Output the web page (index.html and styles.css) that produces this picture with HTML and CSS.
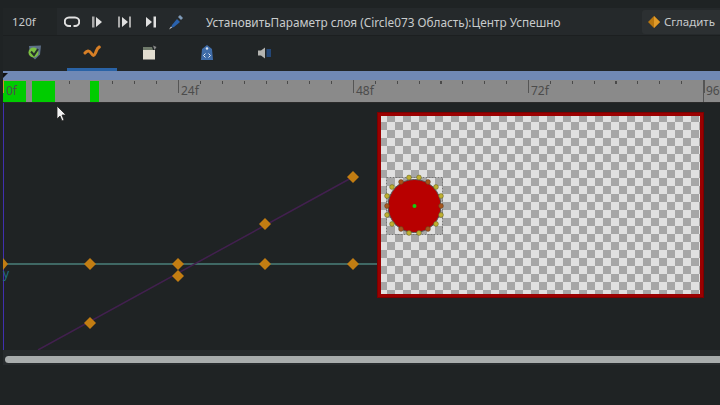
FILE: index.html
```html
<!DOCTYPE html>
<html lang="ru">
<head>
  <meta charset="UTF-8">
  <title>Параметры</title>
  <link rel="stylesheet" href="styles.css">
</head>
<body>
  <div class="app">
    <div class="toolbar">
      <div class="frame-field">120f</div>
      <div class="tools">
        <svg width="16" height="16" viewBox="0 0 16 16"><path d="M5 3.500h6a3.500 3.500 0 0 1 0 8.500H9.500M7 12H5a3.500 3.500 0 0 1 0-8.500" fill="none" stroke="#e0e0e0" stroke-width="2"/></svg>
        <svg width="16" height="16" viewBox="0 0 16 16"><path d="M3 2.500h2.500v11H3z" fill="#a8a8a8"/><path d="M7 3l6 5-6 5z" fill="#e0e0e0"/></svg>
        <svg width="16" height="16" viewBox="0 0 16 16"><path d="M2 2.500h2v11H2zM13 2.500h2v11h-2z" fill="#a8a8a8"/><path d="M6 3l6 5-6 5z" fill="#e0e0e0"/></svg>
        <svg width="16" height="16" viewBox="0 0 16 16"><path d="M3 3l6 5-6 5z" fill="#e0e0e0"/><path d="M10.500 2.500h2.500v11h-2.500z" fill="#e0e0e0"/></svg>
        <svg width="16" height="16" viewBox="0 0 16 16"><path d="M9 5l3 3-6 5-3 1 1-3z" fill="#2a62ad"/><path d="M10 3l2-2 3 3-2 2z" fill="#7f9ab8"/><path d="M1 15.500l2-3 1 1z" fill="#d8d8d8"/></svg>
      </div>
      <div class="status">УстановитьПараметр слоя (Circle073 Область):Центр Успешно</div>
      <button class="smooth-btn">
        <svg width="12" height="12" viewBox="0 0 12 12"><path d="M6 0l6 6-6 6-6-6z" fill="#b8760f"/><path d="M6 0l6 6-6 6z" fill="#e09a28"/></svg>
        Сгладить
      </button>
    </div>

    <div class="tabs">
      <div class="tab">
        <svg width="15" height="15" viewBox="0 0 15 15"><path d="M2 1l12-.5-1 9-5 5-5-5z" fill="#5d7088"/><circle cx="6.500" cy="7.500" r="5" fill="#7cc043"/><path d="M4 6.500l3 3.500 4-6" fill="none" stroke="#26302c" stroke-width="2"/></svg>
      </div>
      <div class="tab active">
        <svg width="18" height="14" viewBox="0 0 18 14"><path d="M2 8C4 5.500 6 5 8 8S11 11.500 12.500 8 14 3 16.300 2" fill="none" stroke="#d77f26" stroke-width="3" stroke-linecap="round"/></svg>
      </div>
      <div class="tab">
        <svg width="15" height="15" viewBox="0 0 15 15"><path d="M1 5h12v9.500H1z" fill="#e2ddd0"/><path d="M1 2h9l1 3H1z" fill="#6f7a6a"/><path d="M11 .5l3.500 1.500-2 3z" fill="#8a8a8a"/></svg>
      </div>
      <div class="tab">
        <svg width="14" height="16" viewBox="0 0 14 16"><path d="M7 0l5 4 1 11H1L2 4z" fill="#3f6ca8"/><circle cx="7" cy="3.500" r="1.200" fill="#d8e2f0"/><path d="M5.500 8.500L3.500 10.500 5.500 12.500M8.500 8.500l2 2-2 2" fill="none" stroke="#e4ecf6"/></svg>
      </div>
      <div class="tab">
        <svg width="15" height="14" viewBox="0 0 15 14"><path d="M1 4.500h3L8 1.500v11l-4-3H1z" fill="#b4b4b0"/><path d="M9.500 3h4.500v8H9.500z" fill="#25508c" opacity="0.8"/></svg>
      </div>
    </div>

    <div class="timeline">
      <div class="range-bar"><span class="range-mark"></span></div>
      <div class="ruler">
        <span class="cached cached-a"></span>
        <span class="cached cached-b"></span>
        <span class="cached cached-c"></span>
        <div class="ruler-cell">0f</div>
        <div class="ruler-cell">24f</div>
        <div class="ruler-cell">48f</div>
        <div class="ruler-cell">72f</div>
        <div class="ruler-cell last">96f</div>
      </div>
    </div>

    <div class="graph">
      <svg class="curves" width="720" height="247" viewBox="0 103 720 247">
        <line x1="3.500" y1="103" x2="3.500" y2="350" stroke="#4030b0" stroke-width="1"/>
        <line x1="3" y1="264" x2="380" y2="264" stroke="#3f6864" stroke-width="2"/>
        <line x1="38" y1="350" x2="353" y2="177" stroke="#42204f" stroke-width="1.500"/>
        <g fill="#c27d12">
          <path d="M353 171l6 6-6 6-6-6z"/>
          <path d="M265 218l6 6-6 6-6-6z"/>
          <path d="M178 270l6 6-6 6-6-6z"/>
          <path d="M90 317l6 6-6 6-6-6z"/>
          <path d="M3 258l5 6-5 6z"/>
          <path d="M90 258l6 6-6 6-6-6z"/>
          <path d="M178 258l6 6-6 6-6-6z"/>
          <path d="M265 258l6 6-6 6-6-6z"/>
          <path d="M353 258l6 6-6 6-6-6z"/>
        </g>
      </svg>
      <span class="axis-label">y</span>

      <div class="preview">
        <svg class="preview-scene" width="72" height="72" viewBox="0 0 72 72">
          <rect x="4.500" y="4.500" width="56" height="57" fill="none" stroke="#777" stroke-width="1" stroke-dasharray="2 1"/>
          <circle cx="32.500" cy="33" r="26.500" fill="#b80000" stroke="#555" stroke-width="1"/>
          <g fill="#c0b030" stroke="#5a5a20" stroke-width="0.500">
            <circle cx="27" cy="4.500" r="2.400"/><circle cx="37" cy="4.500" r="2.400"/>
            <circle cx="10" cy="14" r="2.400"/><circle cx="54" cy="14" r="2.400"/>
            <circle cx="5" cy="23" r="2.400"/><circle cx="59" cy="23" r="2.400"/>
            <circle cx="5" cy="42" r="2.400"/><circle cx="59" cy="42" r="2.400"/>
            <circle cx="10" cy="51" r="2.400"/><circle cx="54" cy="51" r="2.400"/>
            <circle cx="27" cy="60" r="2.400"/><circle cx="37" cy="60" r="2.400"/>
          </g>
          <g fill="#a8551c" stroke="#5a3a18" stroke-width="0.500">
            <circle cx="19" cy="9" r="2.400"/><circle cx="46" cy="9" r="2.400"/>
            <circle cx="5" cy="33" r="2.400"/><circle cx="59" cy="33" r="2.400"/>
            <circle cx="19" cy="56" r="2.400"/><circle cx="46" cy="56" r="2.400"/>
          </g>
          <circle cx="32.500" cy="33" r="2" fill="#10d010"/>
        </svg>
      </div>
    </div>

    <div class="scroll-track"><div class="scroll-thumb"></div></div>
    <div class="footer"></div>

    <svg class="cursor" width="11" height="17" viewBox="0 0 11 17"><path d="M1 1v13l3-3 2 5 2-1-2-5h4z" fill="#f2f2f2" stroke="#222" stroke-width="0.800"/></svg>
  </div>
</body>
</html>
```

FILE: styles.css
```css
html, body {
  margin: 0;
  padding: 0;
  background: #1f2324;
}
.app {
  position: relative;
  width: 720px;
  height: 405px;
  overflow: hidden;
  display: flex;
  flex-direction: column;
  font-family: "Noto Sans", sans-serif;
  color: #c8cbcc;
  background: #1f2324;
}
.toolbar {
  height: 28px;
  margin: 8px 0 0 3px;
  background: #25292b;
  border-bottom: 1px solid #1c1f20;
  box-sizing: border-box;
  display: flex;
  align-items: center;
  font-size: 11.8px;
}
.frame-field {
  width: 45px;
  height: 27px;
  padding-left: 9px;
  line-height: 27px;
  background: #212526;
  font-size: 11.5px;
}
.tools {
  display: grid;
  grid-template-columns: 25px 27px 27px 25px 16px;
  align-items: center;
  margin: 0 22px 0 7px;
}
.tools svg {
  display: block;
}
.status {
  flex: 1;
  white-space: nowrap;
}
.smooth-btn {
  width: 78px;
  height: 24px;
  display: flex;
  align-items: center;
  gap: 4px;
  padding: 0 0 0 6px;
  border: none;
  border-radius: 3px 0 0 3px;
  background: #2c3032;
  color: #c8cbcc;
  font-family: inherit;
  font-size: 11.5px;
}
.tabs {
  height: 35px;
  margin-left: 3px;
  padding-left: 2.750px;
  display: flex;
  background: #212526;
}
.tab {
  width: 50px;
  height: 33px;
  margin: 0 3.750px;
  display: flex;
  align-items: center;
  justify-content: center;
  flex: none;
}
.tab.active {
  height: 32px;
  border-bottom: 3px solid #2a63a6;
}
.timeline {
  margin-left: 3px;
}
.range-bar {
  position: relative;
  height: 9px;
  background: #7089b5;
}
.range-mark {
  position: absolute;
  left: 0;
  top: 2px;
  width: 0;
  height: 0;
  border-left: 5px solid #111;
  border-bottom: 5px solid transparent;
}
.ruler {
  position: relative;
  height: 23px;
  display: flex;
  background-color: #8a8a8a;
  background-image: repeating-linear-gradient(90deg, #4a4a4a 0 1px, transparent 1px 21.875px);
  background-size: 100% 3px;
  background-repeat: no-repeat;
  background-position: 0 1px;
  border-bottom: 1px solid #2a2a2a;
  box-sizing: border-box;
  font-size: 12px;
  color: #4c4c4c;
}
.cached {
  position: absolute;
  top: 1px;
  height: 21px;
  background: #00cc00;
}
.cached-a { left: 0; width: 23px; }
.cached-b { left: 29px; width: 23px; }
.cached-c { left: 87px; width: 9px; }
.ruler-cell {
  position: relative;
  flex: none;
  width: 175px;
  height: 13px;
  padding-left: 2px;
  box-sizing: border-box;
  border-left: 1px solid #555;
  line-height: 21px;
}
.ruler-cell:first-of-type {
  border-left-color: #c8a020;
}
.ruler-cell.last {
  width: 17px;
  overflow: hidden;
  height: 22px;
  background: linear-gradient(#555, #555) 0 0 / 1px 13px no-repeat;
}
.graph {
  position: relative;
  height: 247px;
}
.curves {
  display: block;
}
.axis-label {
  position: absolute;
  left: 3px;
  top: 162px;
  font-size: 12px;
  color: #1f6f80;
}
.preview {
  position: absolute;
  left: 377px;
  top: 9px;
  width: 319px;
  height: 178px;
  border: 4px solid #9a0000;
  outline: 1px solid #7c0000;
  outline-offset: -1px;
  background: repeating-conic-gradient(#e0e0e0 0 25%, #a6a6a6 0 50%) -10px -2px / 16px 16px;
  background-origin: padding-box;
  background-clip: padding-box;
}
.preview-scene {
  position: absolute;
  left: 1px;
  top: 57px;
}
.scroll-track {
  height: 15px;
  margin-left: 3px;
  padding: 6px 0 2px 2px;
  box-sizing: border-box;
  background: #272b2d;
}
.scroll-thumb {
  height: 7px;
  border-radius: 4px 0 0 4px;
  background: #a9adad;
}
.footer {
  flex: 1;
}
.cursor {
  position: absolute;
  left: 56px;
  top: 105px;
}
```
